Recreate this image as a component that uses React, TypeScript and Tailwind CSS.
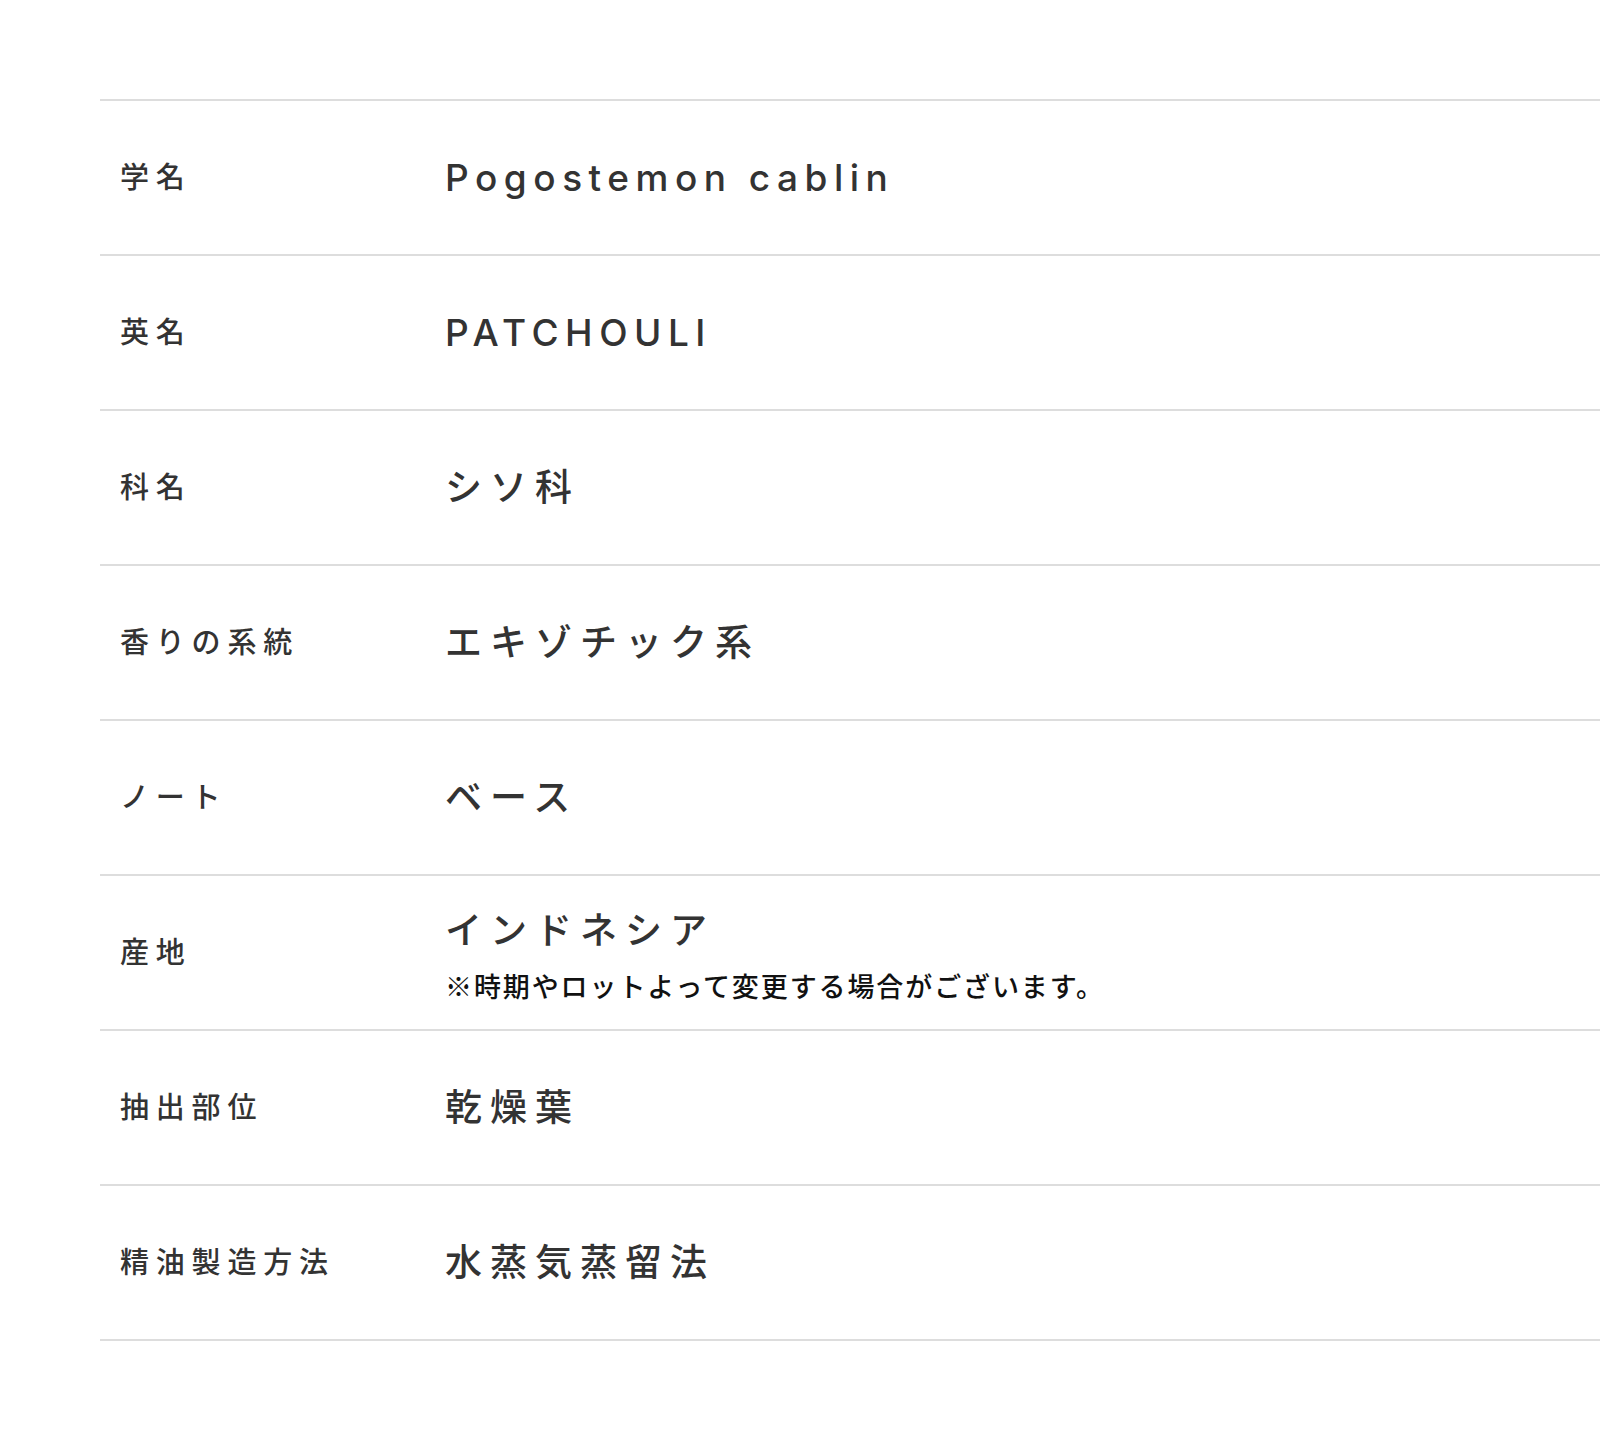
import React from "react";

const rows: { label: string; value: string; latin?: boolean; note?: string }[] = [
  { label: "学名", value: "Pogostemon cablin", latin: true },
  { label: "英名", value: "PATCHOULI", latin: true },
  { label: "科名", value: "シソ科" },
  { label: "香りの系統", value: "エキゾチック系" },
  { label: "ノート", value: "ベース" },
  { label: "産地", value: "インドネシア", note: "※時期やロットよって変更する場合がございます。" },
  { label: "抽出部位", value: "乾燥葉" },
  { label: "精油製造方法", value: "水蒸気蒸留法" },
];

export default function App() {
  return (
    <div
      className="min-h-[1440px] bg-white pt-[99px] pl-[100px] text-[#333]"
      style={{ fontFamily: '"Inter", "Noto Sans CJK JP", sans-serif' }}
    >
      <div className="border-t-2 border-[#dddddd]">
        {rows.map((r) => (
          <div
            key={r.label}
            className="grid h-[155px] grid-cols-[345px_1fr] items-center border-b-2 border-[#dddddd]"
          >
            <div className="pl-[20px] text-[29px] font-medium leading-none tracking-[6.8px]">{r.label}</div>
            <div>
              {r.latin ? (
                <div className="text-[37px] font-medium leading-[66px] tracking-[6.5px]">{r.value}</div>
              ) : (
                <div className="text-[37px] font-medium leading-[66px] tracking-[8px]">{r.value}</div>
              )}
              {r.note && (
                <div
                  className="text-[27px] font-medium leading-[43px] tracking-[1.9px] text-[#111]"
                  style={{ fontFamily: '"Noto Sans CJK JP", sans-serif' }}
                >
                  {r.note}
                </div>
              )}
            </div>
          </div>
        ))}
      </div>
    </div>
  );
}
